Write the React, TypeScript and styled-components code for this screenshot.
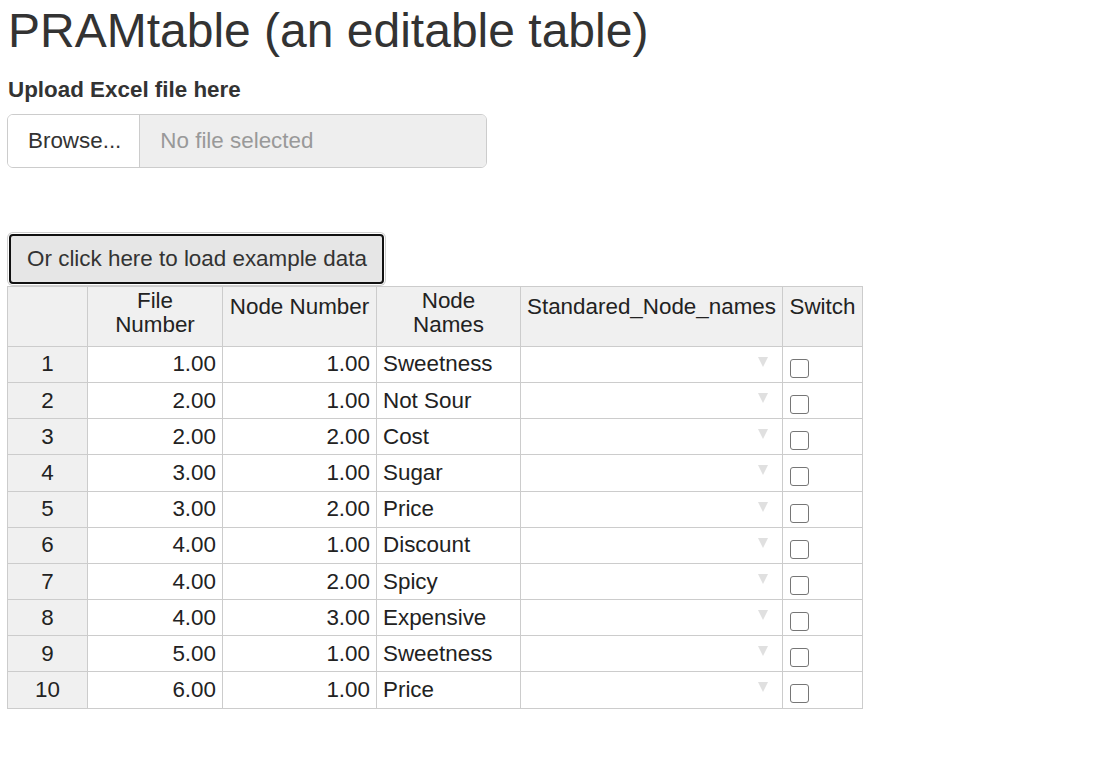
import styled, { createGlobalStyle } from "styled-components";

const GlobalStyle = createGlobalStyle`
    body {
        margin: 0;
        background: #fff;
        color: #333;
        font-family: "Liberation Sans", Arial, sans-serif;
    }
`;

const Page = styled.div`
    padding: 5px 7px 40px 7px;
`;

const Title = styled.h2`
    margin: 0 0 16px 1px;
    font-size: 48px;
    font-weight: 400;
    line-height: 52.8px;
    color: #333;
`;

const Label = styled.label`
    display: block;
    margin: 0 0 8px 1px;
    font-size: 22.4px;
    font-weight: 700;
    line-height: 32px;
`;

const FileGroup = styled.div`
    display: flex;
    width: 480px;
    height: 54px;
    box-sizing: border-box;
    border: 1px solid #ccc;
    border-radius: 6px;
    overflow: hidden;
    font-size: 22.4px;
`;

const BrowseButton = styled.span`
    display: flex;
    align-items: center;
    padding: 0 18px 0 20px;
    background: #fff;
    border-right: 1px solid #ccc;
    color: #333;
`;

const FileName = styled.span`
    flex: 1;
    display: flex;
    align-items: center;
    padding-left: 20px;
    background: #eee;
    color: #999;
`;

const ExampleButton = styled.button`
    display: block;
    margin: 66px 0 2px 2px;
    width: 375px;
    height: 50px;
    box-sizing: border-box;
    padding: 0 0 0 1px;
    border: 2px solid #111;
    border-radius: 4px;
    background: #e6e6e6;
    box-shadow: 0 0 0 1px #fff, 0 0 0 2px #cfcfcf;
    font-family: "Liberation Sans", Arial, sans-serif;
    font-size: 22.4px;
    color: #333;
`;

const Table = styled.table`
    border-collapse: collapse;
    table-layout: fixed;
    font-size: 22.4px;
    color: #222;
`;

const HeadCell = styled.th<{ $single?: boolean }>`
    height: 60px;
    padding: ${(p) => (p.$single ? "8px" : "2px")} 4px 0 4px;
    box-sizing: border-box;
    border: 1px solid #ccc;
    background: #f0f0f0;
    font-weight: 400;
    line-height: 24px;
    text-align: center;
    vertical-align: top;
`;

const RowHead = styled.th`
    height: 35.2px;
    padding: 0;
    border: 1px solid #ccc;
    background: #f0f0f0;
    font-weight: 400;
    text-align: center;
    vertical-align: middle;
`;

const Cell = styled.td<{ $align?: "left" | "right" }>`
    height: 35.2px;
    padding: 0 6px 0 6px;
    border: 1px solid #ccc;
    text-align: ${(p) => p.$align || "left"};
    vertical-align: middle;
    white-space: nowrap;
`;

const DropCell = styled.td`
    height: 35.2px;
    padding: 0;
    border: 1px solid #ccc;
    vertical-align: top;
`;

const DropInner = styled.div`
    display: flex;
    justify-content: flex-end;
    padding: 10px 14px 0 0;
`;

const Arrow = styled.span`
    width: 0;
    height: 0;
    border-left: 5px solid transparent;
    border-right: 5px solid transparent;
    border-top: 10px solid #e0e0e0;
`;

const CheckCell = styled.td`
    height: 35.2px;
    padding: 0;
    border: 1px solid #ccc;
    vertical-align: top;
`;

const CheckBox = styled.input`
    appearance: none;
    display: block;
    margin: 12px 0 0 7px;
    width: 19px;
    height: 19px;
    box-sizing: border-box;
    border: 1.5px solid #767676;
    border-radius: 3px;
    background: #fff;
`;

const rows = [
    { file: "1.00", node: "1.00", name: "Sweetness" },
    { file: "2.00", node: "1.00", name: "Not Sour" },
    { file: "2.00", node: "2.00", name: "Cost" },
    { file: "3.00", node: "1.00", name: "Sugar" },
    { file: "3.00", node: "2.00", name: "Price" },
    { file: "4.00", node: "1.00", name: "Discount" },
    { file: "4.00", node: "2.00", name: "Spicy" },
    { file: "4.00", node: "3.00", name: "Expensive" },
    { file: "5.00", node: "1.00", name: "Sweetness" },
    { file: "6.00", node: "1.00", name: "Price" },
];

const App = () => {
    return (
        <Page>
            <GlobalStyle />
            <Title>PRAMtable (an editable table)</Title>
            <Label>Upload Excel file here</Label>
            <FileGroup>
                <BrowseButton>Browse...</BrowseButton>
                <FileName>No file selected</FileName>
            </FileGroup>

            <ExampleButton>Or click here to load example data</ExampleButton>

            <Table>
                <colgroup>
                    <col style={{ width: 80 }} />
                    <col style={{ width: 135 }} />
                    <col style={{ width: 154 }} />
                    <col style={{ width: 144 }} />
                    <col style={{ width: 262 }} />
                    <col style={{ width: 80 }} />
                </colgroup>
                <thead>
                    <tr>
                        <HeadCell />
                        <HeadCell>File<br />Number</HeadCell>
                        <HeadCell $single>Node Number</HeadCell>
                        <HeadCell>Node<br />Names</HeadCell>
                        <HeadCell $single>Standared_Node_names</HeadCell>
                        <HeadCell $single>Switch</HeadCell>
                    </tr>
                </thead>
                <tbody>
                    {rows.map((r, i) => (
                        <tr key={i}>
                            <RowHead>{i + 1}</RowHead>
                            <Cell $align="right">{r.file}</Cell>
                            <Cell $align="right">{r.node}</Cell>
                            <Cell>{r.name}</Cell>
                            <DropCell>
                                <DropInner>
                                    <Arrow />
                                </DropInner>
                            </DropCell>
                            <CheckCell>
                                <CheckBox type="checkbox" readOnly />
                            </CheckCell>
                        </tr>
                    ))}
                </tbody>
            </Table>
        </Page>
    );
};

export default App;
